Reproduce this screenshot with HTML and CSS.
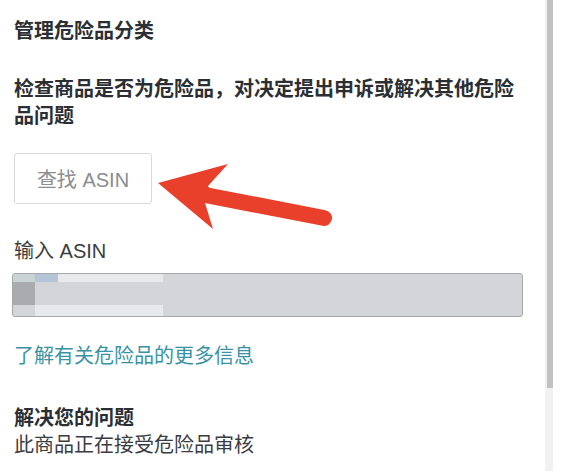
FILE: index.html
```html
<!DOCTYPE html>
<html lang="zh-CN">
<head>
<meta charset="utf-8">
<link rel="stylesheet" href="styles.css">
</head>
<body>
<div class="page">
  <main class="content">
    <h1 class="title">管理危险品分类</h1>
    <p class="lead">检查商品是否为危险品，对决定提出申诉或解决其他危险品问题</p>
    <button class="find-btn" type="button">查找 ASIN</button>
    <label class="field-label">输入 ASIN</label>
    <div class="asin-input">
      <span class="m m1"></span><span class="m m2"></span><span class="m m3"></span><span class="m m0"></span>
      <span class="m m4"></span><span class="m m0"></span><span class="m m0"></span><span class="m m0"></span>
      <span class="m m0"></span><span class="m m3"></span><span class="m m3"></span><span class="m m0"></span>
    </div>
    <a class="more-link" href="#">了解有关危险品的更多信息</a>
    <h2 class="sub-title">解决您的问题</h2>
    <p class="status">此商品正在接受危险品审核</p>
  </main>
  <div class="scrollbar"><div class="thumb"></div></div>
  <svg class="arrow" width="563" height="471" viewBox="0 0 563 471">
    <line x1="205" y1="195" x2="324" y2="218" stroke="#e8402a" stroke-width="16" stroke-linecap="round"/>
    <polygon points="158,183 228,164 208,186 214,196 205,203 213,229" fill="#e8402a"/>
  </svg>
</div>
</body>
</html>
```
FILE: styles.css
```css
* { box-sizing: border-box; }
html, body { margin: 0; padding: 0; background: #fff; }
body {
  font-family: "Noto Sans CJK SC", "Liberation Sans", sans-serif;
  color: #333;
}
.page {
  position: relative;
  width: 563px;
  height: 471px;
  overflow: hidden;
  display: flex;
}
.content {
  width: 545px;
  padding: 16px 23px 0 14px;
  display: flex;
  flex-direction: column;
  align-items: flex-start;
}
.title {
  margin: 0;
  font-size: 20px;
  line-height: 27px;
  font-weight: 700;
  color: #2b2f33;
}
.lead {
  margin: 31px 0 0;
  font-size: 20px;
  line-height: 27px;
  font-weight: 700;
  color: #2b2f33;
}
.find-btn {
  margin-top: 25px;
  width: 138px;
  height: 51px;
  background: #fff;
  border: 1px solid #d8d9db;
  border-radius: 3px;
  font-family: "Liberation Sans", "Noto Sans CJK SC", sans-serif;
  font-size: 20px;
  color: #8a8d91;
  padding: 0;
}
.field-label {
  margin-top: 34px;
  font-family: "Liberation Sans", "Noto Sans CJK SC", sans-serif;
  font-size: 20px;
  line-height: 27px;
  color: #3a3d41;
}
.asin-input {
  margin: 8px 0 0 -2px;
  width: 511px;
  height: 44px;
  background: #d4d5d8;
  border: 1px solid #a6a8ab;
  border-radius: 3px;
  overflow: hidden;
  display: grid;
  grid-template-columns: 22px 23px 105px 1fr;
  grid-template-rows: 8px 23px 11px;
}
.m0 { background: transparent; }
.m1 { background: #c9d5d5; }
.m2 { background: #b6c5d6; }
.m3 { background: #e8e9eb; }
.m4 { background: #a9abae; }
.more-link {
  margin-top: 24px;
  font-size: 20px;
  line-height: 27px;
  color: #3793a4;
  text-decoration: none;
}
.sub-title {
  margin: 35px 0 0;
  font-size: 20px;
  line-height: 27px;
  font-weight: 700;
  color: #2b2f33;
}
.status {
  margin: 0;
  font-size: 20px;
  line-height: 27px;
  color: #3a3d41;
}
.scrollbar {
  width: 8px;
  height: 471px;
  background: #f1f1f1;
  display: flex;
  justify-content: flex-end;
}
.thumb {
  width: 6px;
  height: 388px;
  background: #c1c1c1;
}
.arrow {
  position: absolute;
  left: 0;
  top: 0;
  pointer-events: none;
}
```
